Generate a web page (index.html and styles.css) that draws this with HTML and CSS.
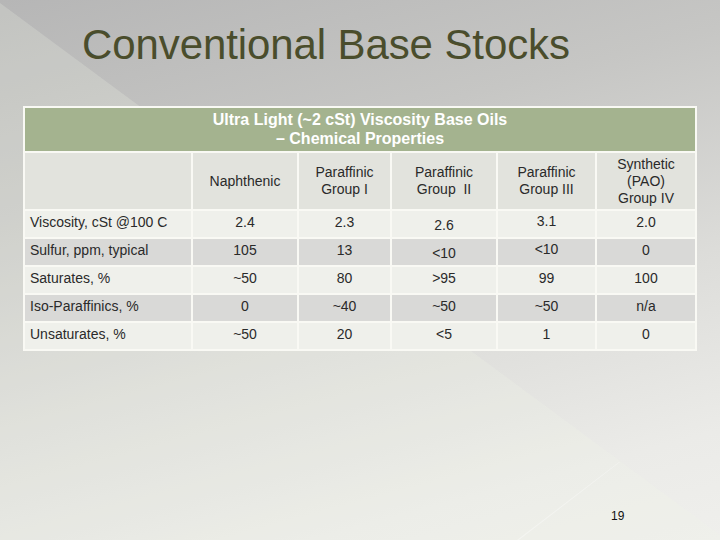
FILE: index.html
```html
<!DOCTYPE html>
<html>
<head>
<meta charset="utf-8">
<link rel="stylesheet" href="styles.css">
</head>
<body>
<div class="slide">
  <div class="deco-light"></div>
  <div class="deco-line"></div>
  <h1 class="title">Conventional Base Stocks</h1>
  <table class="props">
    <colgroup>
      <col class="c1"><col class="c2"><col class="c3"><col class="c4"><col class="c5"><col class="c6">
    </colgroup>
    <tr class="head">
      <th colspan="6">Ultra Light (~2 cSt) Viscosity Base Oils<br>– Chemical Properties</th>
    </tr>
    <tr class="colheads">
      <td></td>
      <td>Naphthenic</td>
      <td>Paraffinic<br>Group I</td>
      <td>Paraffinic<br>Group &nbsp;II</td>
      <td>Paraffinic<br>Group III</td>
      <td>Synthetic<br>(PAO)<br>Group IV</td>
    </tr>
    <tr class="row light">
      <td class="label">Viscosity, cSt @100 C</td>
      <td>2.4</td><td>2.3</td><td class="low">2.6</td><td class="high">3.1</td><td>2.0</td>
    </tr>
    <tr class="row dark">
      <td class="label">Sulfur, ppm, typical</td>
      <td>105</td><td>13</td><td class="low">&lt;10</td><td class="high">&lt;10</td><td>0</td>
    </tr>
    <tr class="row light">
      <td class="label">Saturates, %</td>
      <td>~50</td><td>80</td><td>&gt;95</td><td>99</td><td>100</td>
    </tr>
    <tr class="row dark">
      <td class="label">Iso-Paraffinics, %</td>
      <td>0</td><td>~40</td><td>~50</td><td>~50</td><td>n/a</td>
    </tr>
    <tr class="row light">
      <td class="label">Unsaturates, %</td>
      <td>~50</td><td>20</td><td>&lt;5</td><td>1</td><td>0</td>
    </tr>
  </table>
  <div class="pagenum">19</div>
</div>
</body>
</html>
```

FILE: styles.css
```css
html, body {
  margin: 0;
  padding: 0;
}
body {
  width: 720px;
  height: 540px;
  overflow: hidden;
  font-family: "Liberation Sans", Arial, sans-serif;
}
.slide {
  position: relative;
  width: 720px;
  height: 540px;
  overflow: hidden;
  background: linear-gradient(165deg, #b6b6b6 0%, #c6c6c4 30%, #dcdcd9 60%, #ebebe8 85%, #efefec 100%);
}
.deco-light {
  position: absolute;
  left: 0;
  top: 0;
  width: 720px;
  height: 540px;
  background: rgba(240, 244, 230, 0.22);
  clip-path: polygon(0 3px, 720px 535px, 720px 540px, 0 540px);
}
.deco-line {
  position: absolute;
  left: 0;
  top: 0;
  width: 720px;
  height: 540px;
  background: rgba(255, 255, 255, 0.35);
  clip-path: polygon(517px 540px, 619px 462px, 620px 462px, 519px 540px);
}
.title {
  position: relative;
  margin: 0;
  padding: 21px 0 0 82px;
  font-size: 42px;
  line-height: 48px;
  font-weight: normal;
  color: #4a4d2c;
  letter-spacing: -0.1px;
}
.props {
  position: relative;
  margin: 37px 0 0 23px;
  width: 674px;
  table-layout: fixed;
  border-collapse: separate;
  border-spacing: 2px;
  background: #f9f9f4;
  font-size: 14px;
  color: #2a2a2a;
}
.c1 { width: 166px; }
.c2 { width: 104px; }
.c3 { width: 91px; }
.c4 { width: 104px; }
.c5 { width: 97px; }
.c6 { width: 98px; }
.props td, .props th {
  padding: 0;
  text-align: center;
  vertical-align: middle;
}
.head th {
  height: 42px;
  background: #a4b38f;
  color: #ffffff;
  font-weight: bold;
  font-size: 16px;
  line-height: 19px;
  padding-bottom: 1px;
}
.colheads td {
  height: 56px;
  background: #e2e3dd;
  line-height: 17px;
}
.row td {
  height: 26px;
  line-height: 16px;
  padding-bottom: 4px;
  box-sizing: border-box;
}
.row td.low { padding-bottom: 0; padding-top: 1px; }
.row td.high { padding-bottom: 6px; }
.row.light td { background: #eff0eb; }
.row.dark td { background: #d9d9d7; }
.props td.label {
  text-align: left;
  padding-left: 5px;
}
.pagenum {
  position: relative;
  margin: 158px 0 0 611px;
  font-size: 12px;
  line-height: 14px;
  color: #111;
}
```
